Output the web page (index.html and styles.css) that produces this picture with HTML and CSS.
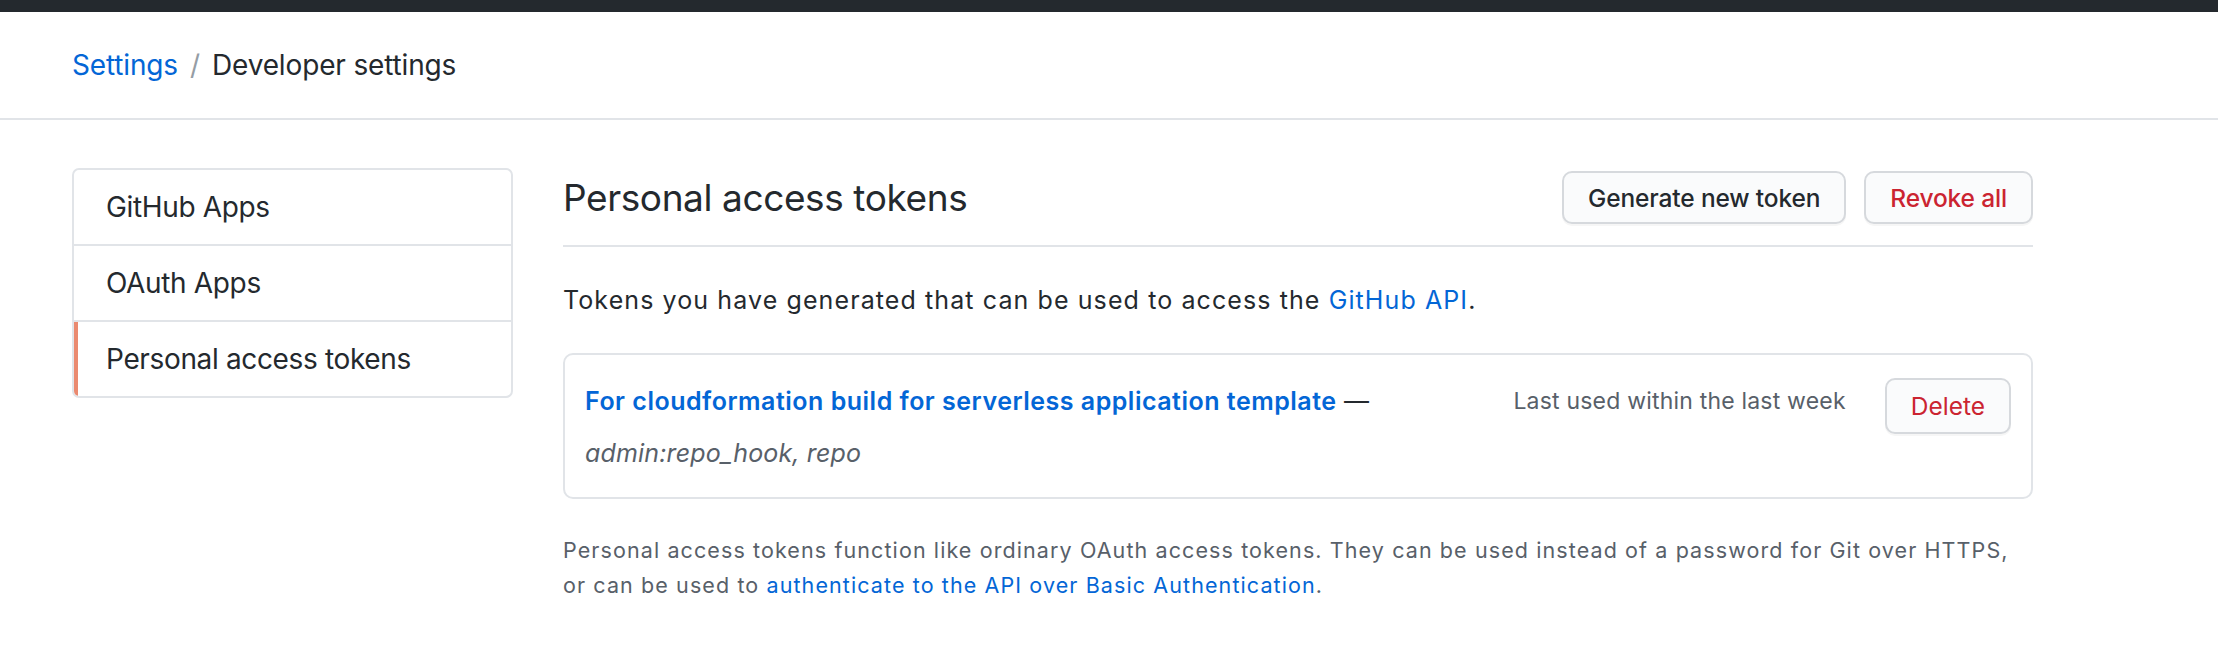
FILE: index.html
```html
<!DOCTYPE html>
<html lang="en">
<head>
<meta charset="utf-8">
<title>Personal access tokens</title>
<link rel="stylesheet" href="styles.css">
</head>
<body>
<div class="topbar"></div>
<header class="crumbs">
  <a href="#">Settings</a><span class="sep">/</span><span class="current">Developer settings</span>
</header>
<div class="layout">
  <nav class="menu">
    <a class="menu-item" href="#">GitHub Apps</a>
    <a class="menu-item" href="#">OAuth Apps</a>
    <a class="menu-item selected" href="#">Personal access tokens</a>
  </nav>
  <main class="content">
    <div class="subhead">
      <h2 class="subhead-title">Personal access tokens</h2>
      <div class="actions">
        <button class="btn">Generate new token</button>
        <button class="btn btn-danger">Revoke all</button>
      </div>
    </div>
    <p class="intro">Tokens you have generated that can be used to access the <a href="#">GitHub API</a>.</p>
    <div class="token">
      <div class="token-main">
        <div class="token-title"><a href="#">For cloudformation build for serverless application template</a> —</div>
        <div class="scopes"><em>admin:repo_hook, repo</em></div>
      </div>
      <span class="last-used">Last used within the last week</span>
      <button class="btn btn-danger btn-delete">Delete</button>
    </div>
    <p class="note">Personal access tokens function like ordinary OAuth access tokens. They can be used instead of a password for Git over HTTPS,<br>or can be used to <a href="#">authenticate to the API over Basic Authentication</a>.</p>
  </main>
</div>
</body>
</html>
```
FILE: styles.css
```css
* { box-sizing: border-box; }
body {
  margin: 0;
  font-family: Inter, "Liberation Sans", sans-serif;
  color: #24292e;
  background: #fff;
}
a { color: #0366d6; text-decoration: none; }

.topbar { height: 12px; background: #24292e; }

.crumbs {
  height: 108px;
  border-bottom: 2px solid #e1e4e8;
  display: flex;
  align-items: center;
  padding-left: 72px;
  font-size: 28px;
  letter-spacing: -0.15px;
}
.crumbs .sep { color: #959da5; margin: 0 12px; }

.layout {
  display: flex;
  align-items: flex-start;
  gap: 50px;
  padding: 48px 0 0 72px;
}

.menu {
  width: 441px;
  flex: none;
  display: flex;
  flex-direction: column;
  border: 2px solid #e1e4e8;
  border-radius: 7px;
  overflow: hidden;
}
.menu-item {
  line-height: 74px;
  padding-left: 32px;
  font-size: 28px;
  letter-spacing: -0.35px;
  color: #24292e;
}
.menu-item + .menu-item { border-top: 2px solid #e1e4e8; }
.menu-item.selected { box-shadow: inset 4px 0 0 #ea8a70; }

.content { width: 1470px; flex: none; }

.subhead {
  display: flex;
  align-items: center;
  justify-content: space-between;
  padding: 3px 0 21px;
  border-bottom: 2px solid #e1e4e8;
}
.subhead-title {
  margin: 0;
  font-size: 37px;
  letter-spacing: -0.4px;
  font-weight: 400;
  line-height: 53px;
}
.actions { display: flex; gap: 18px; }

.btn {
  height: 53px;
  padding: 0 24px;
  border: 2px solid #d6d9dd;
  border-radius: 10px;
  background: #fafbfc;
  box-shadow: 0 2px 0 rgba(27, 31, 35, 0.04);
  font-family: inherit;
  font-size: 24.5px;
  font-weight: 500;
  letter-spacing: -0.15px;
  color: #24292e;
}
.btn-danger { color: #cb2431; }

.intro {
  margin: 35px 0;
  font-size: 25px;
  letter-spacing: 1.1px;
  line-height: 36px;
}

.token {
  display: flex;
  align-items: flex-start;
  border: 2px solid #e1e4e8;
  border-radius: 10px;
  padding: 28px 20px 26px 20px;
}
.token-main { flex: 1; }
.token-title { font-size: 25px; letter-spacing: 0.5px; line-height: 36px; }
.token-title a { font-weight: 600; }
.scopes {
  margin-top: 16px;
  font-size: 25px;
  letter-spacing: 0.15px;
  line-height: 36px;
  color: #586069;
}
.last-used {
  font-size: 23px;
  letter-spacing: 0.2px;
  line-height: 36px;
  color: #586069;
}
.btn-delete {
  height: 56px;
  margin: -5px 0 0 39px;
  padding: 0 24px;
  font-weight: 400;
  letter-spacing: 0;
}

.note {
  margin: 34px 0 0;
  font-size: 21.5px;
  letter-spacing: 1.1px;
  line-height: 35px;
  color: #586069;
}
```
